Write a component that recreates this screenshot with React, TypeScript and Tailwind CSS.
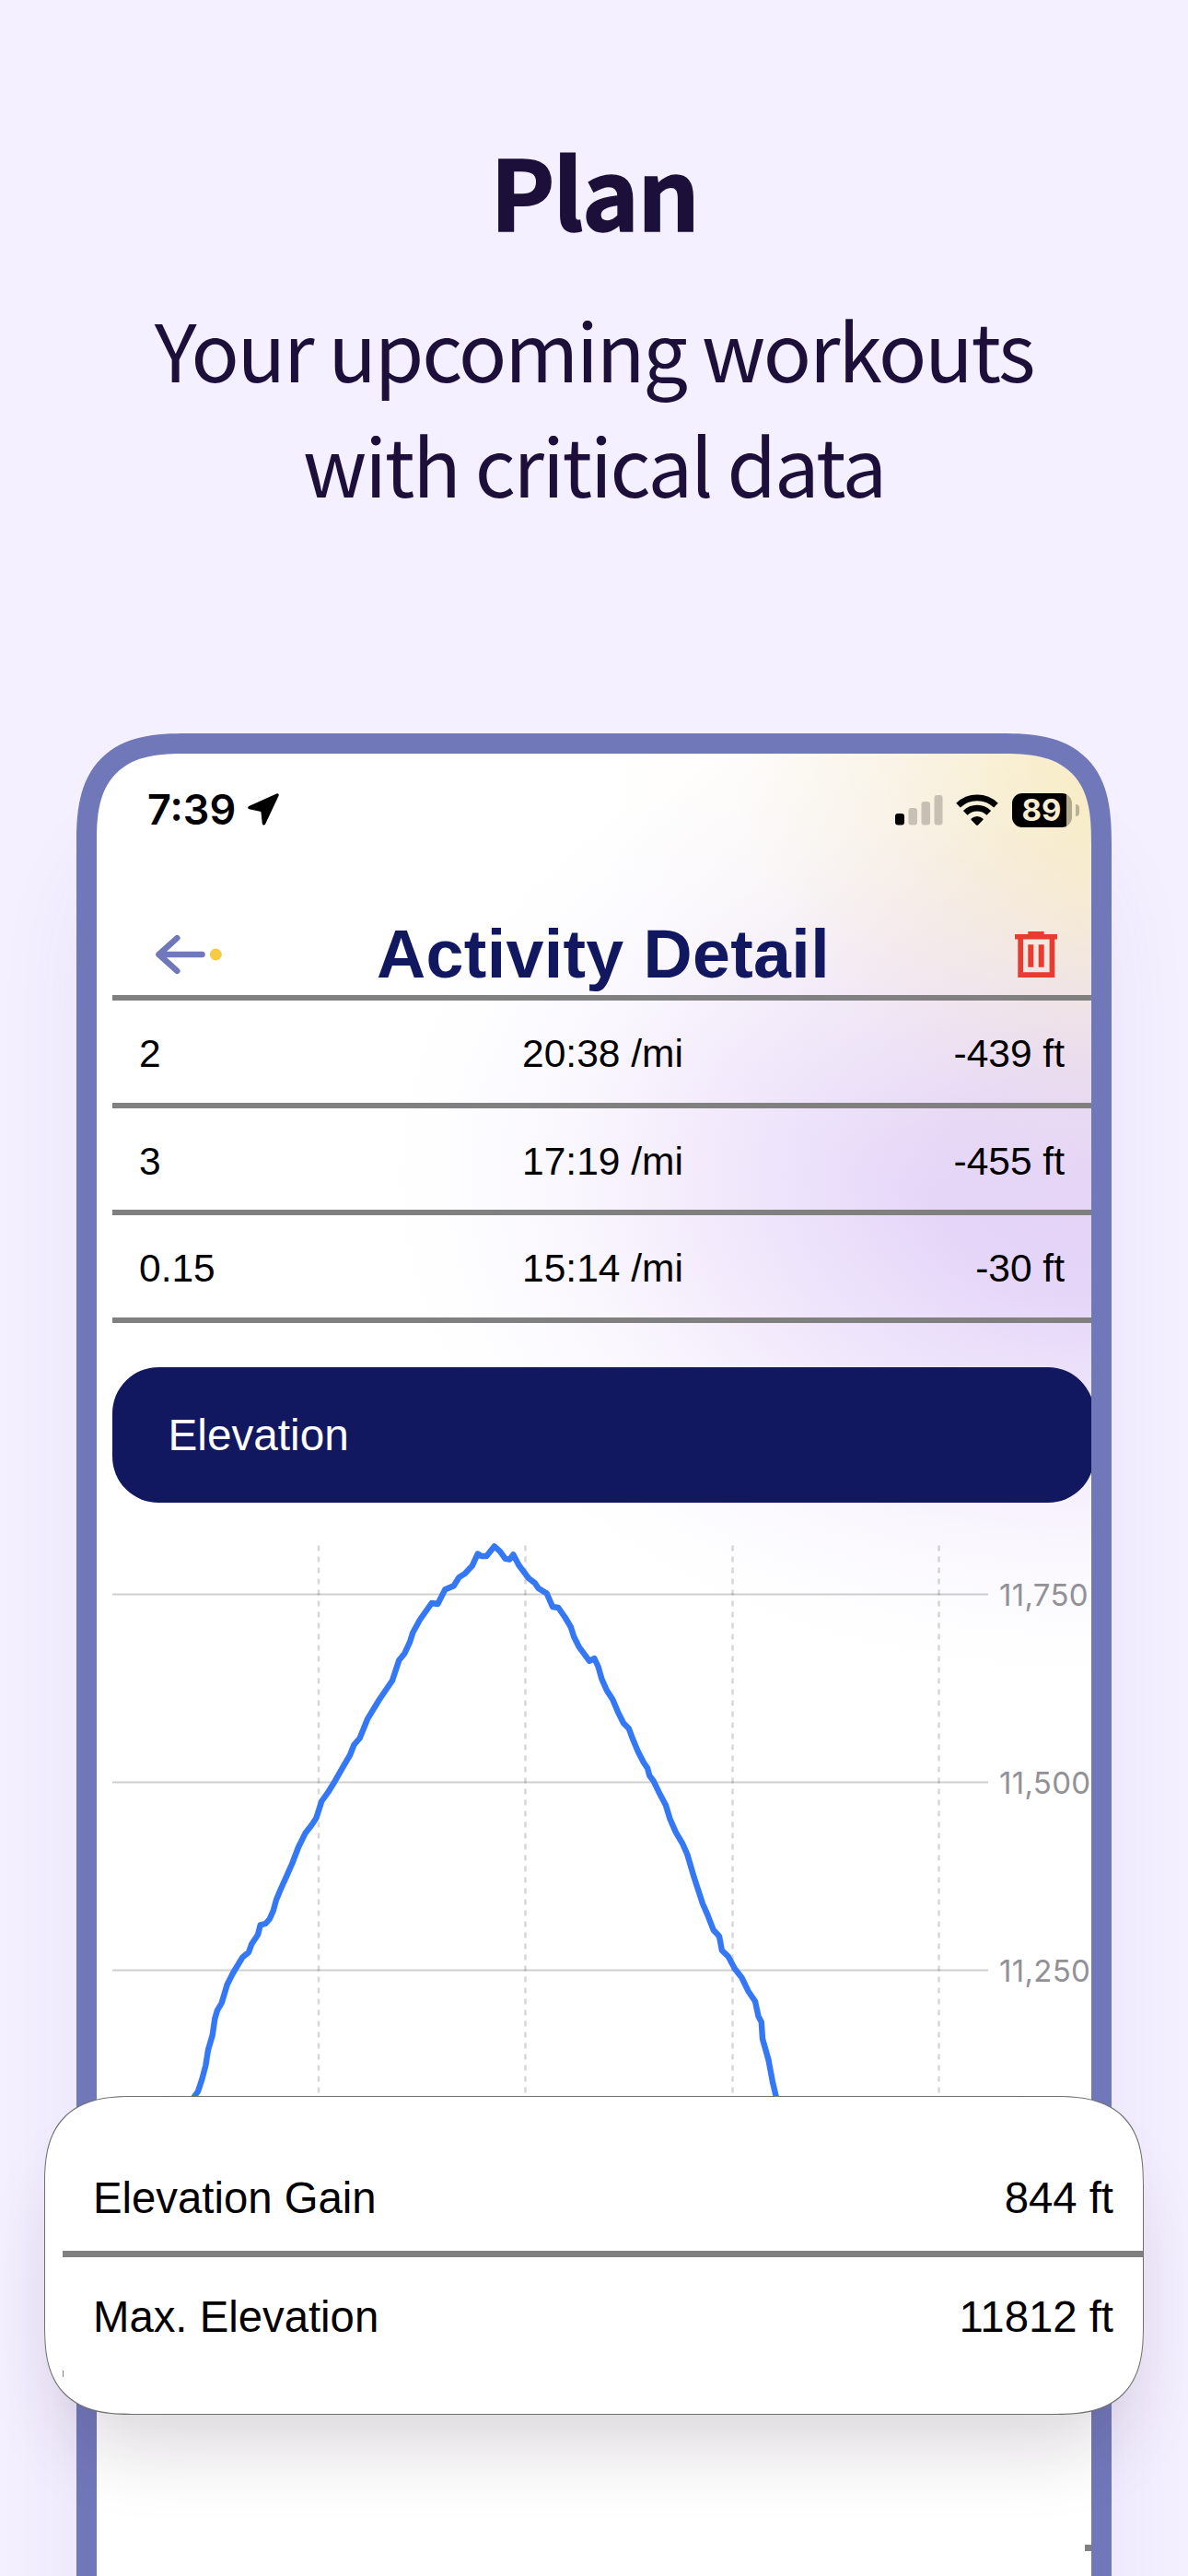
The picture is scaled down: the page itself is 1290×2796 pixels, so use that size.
const splits = [
  { distance: "2", pace: "20:38 /mi", change: "-439 ft" },
  { distance: "3", pace: "17:19 /mi", change: "-455 ft" },
  { distance: "0.15", pace: "15:14 /mi", change: "-30 ft" },
];

const summary = [
  { label: "Elevation Gain", value: "844 ft" },
  { label: "Max. Elevation", value: "11812 ft" },
];

const yTicks = [
  { label: "11,750", y: 70.5 },
  { label: "11,500", y: 274.5 },
  { label: "11,250", y: 478.5 },
];

const xTicks = [224, 448.5, 673.5, 897.5];

const elevation =
  "88,617 93,610 97.3,597 101.3,582 104,565 108.7,549 111.3,531 114,522 118.7,514 124.7,494 131.3,481 141.3,464.5 148,459 151.3,450 158,440 160.7,429.4 166.3,428 170.7,423 174.7,414 178,402 183,390 188.7,377.5 195.3,362.5 202,345 209.7,329.4 216.3,321 221.3,313.5 227.3,295 234,285.7 242,272.7 251.3,256.3 258,245 262.3,234 268.7,226.5 277.3,205.3 289.7,185 304,164 311.3,142 317.3,134.7 323,122.4 326.3,112 334,98 346.7,80 353.3,81 361.3,65.3 370.7,61.2 376.3,52.2 383,47.8 390.7,39.6 396.7,26.5 400.7,29 406.3,29 414.7,18.4 420.7,23.7 426.7,31.8 431.3,32.7 435.3,27.3 441.3,38.8 452,53 459,58.4 462.7,64 471.7,69.4 478,84 484.3,85 491.9,96 497.8,106 501.1,116.3 506.6,127.3 518,142.9 523.4,140 527.6,149 531.4,162.4 536.9,174.7 543.2,184.5 548.7,197.6 555,210.2 560.9,216.3 565.5,228.6 570.6,240.8 576.9,253 581.1,259.2 583.2,267.3 587.4,272.7 593.7,285.7 600.9,299.2 605.5,314.3 611.8,328.6 619,340.8 624.4,353 631.6,377.6 637,393.9 640.9,406 646.3,418.4 652.6,434.7 659,441.6 661.9,457 668.6,463.3 675.8,476.7 683.4,486.5 690.5,501.2 698,512.2 701.5,528.6 704.8,534.7 706,553 712.4,575.5 717,600 720.8,616";

function StatusBar() {
  return (
    <div className="flex h-[122px] shrink-0 items-center pl-[55px] pr-[13px] text-black">
      <span className="w-[95px] whitespace-nowrap font-['Inter',sans-serif] text-[45px] font-semibold leading-[50px]">
        7:39
      </span>
      <svg className="ml-[13px] h-9 w-9" viewBox="0 0 36 36">
        <path
          d="M3 15.500 33 2 18.500 32.800 17 18.500Z"
          fill="currentColor"
          stroke="currentColor"
          strokeWidth="3.500"
          strokeLinejoin="round"
        />
      </svg>

      <div className="ml-auto flex items-center">
        <svg className="h-[34px] w-[52px]" viewBox="0 0 52 34">
          <rect x="0" y="21" width="10" height="12.500" rx="3" />
          <g fillOpacity="0.2">
            <rect x="14.500" y="15" width="9.500" height="18.500" rx="3" />
            <rect x="28.500" y="8" width="9.500" height="25.500" rx="3" />
            <rect x="42.500" y="1" width="9" height="32.500" rx="3" />
          </g>
        </svg>
        <svg className="ml-[14px] h-[35px] w-[46px]" viewBox="0 0 46 35">
          <g fill="none" stroke="currentColor" strokeWidth="6.600">
            <path d="M2.500 12.200a29.500 29.500 0 0 1 41 0" />
            <path d="M10.200 20.300a18.300 18.300 0 0 1 25.600 0" />
          </g>
          <path d="M16.700 26.500a9 9 0 0 1 12.600 0c.5.5.5 1 0 1.500l-5.300 5.500c-.6.6-1.400.6-2 0L16.700 28c-.5-.5-.5-1 0-1.500Z" />
        </svg>
        <div className="ml-[15px] flex h-[37px] w-[65px] items-center justify-center rounded-[11px] bg-[linear-gradient(90deg,#000_59px,#b2a88c_59px)]">
          <span className="font-['Inter',sans-serif] text-[33px] font-bold leading-[37px] text-[#f9edcf]">
            89
          </span>
        </div>
        <div className="ml-1 h-[13px] w-[4.500px] rounded-r-full bg-black/25" />
      </div>
    </div>
  );
}

function TitleBar() {
  return (
    <div className="flex h-[140px] shrink-0 items-center pl-16 pt-[51px]">
      <svg className="h-[46px] w-[74px]" viewBox="0 0 74 46">
        <path
          d="M50.500 23H3.500M23.300 5.200 3.500 23l19.800 17.800"
          fill="none"
          stroke="#7178ba"
          strokeWidth="6.500"
          strokeLinecap="round"
          strokeLinejoin="round"
        />
        <circle cx="65.300" cy="23" r="6.500" fill="#f6cb45" />
      </svg>
      <h2 className="ml-[166px] w-[490px] whitespace-nowrap text-[73.600px] font-bold leading-[89px] tracking-[0.35px] text-[#121860]">
        Activity Detail
      </h2>
      <svg className="ml-[203px] h-[50px] w-[46px]" viewBox="0 0 46 50" fill="#e93b30">
        <path d="M14.300 0h17.400v3H46v5.400h-2.700V50H3.300V8.400H0V3h14.300V0ZM9 8.400v35.800h28.600V8.400H9Z" />
        <path d="M14.300 14.200h6v24.600h-6zM25.700 14.200h6v24.600h-6z" />
      </svg>
    </div>
  );
}

function SplitsTable() {
  return (
    <div className="ml-[17px] shrink-0 border-t-[6px] border-[#808080]">
      {splits.map((split) => (
        <div
          key={split.distance}
          className="grid h-[116.600px] grid-cols-3 items-center border-b-[6px] border-[#808080] pl-[29px] pr-[29px] pt-1.5 text-[42.500px] leading-[50px] text-black"
        >
          <span>{split.distance}</span>
          <span className="pl-0.5 text-center">{split.pace}</span>
          <span className="text-right">{split.change}</span>
        </div>
      ))}
    </div>
  );
}

function ElevationChart() {
  return (
    <svg className="ml-[17px] mt-[29px] h-[640px] w-[1063px] shrink-0" viewBox="0 0 1063 640">
      {yTicks.map((tick) => (
        <g key={tick.label}>
          <line x1="0" x2="951" y1={tick.y} y2={tick.y} stroke="#00000030" strokeWidth="2" />
          <text
            x="963"
            y={tick.y + 12}
            className="font-['Inter',sans-serif] text-[33px] tracking-[0.3px]"
            fill="#929197"
          >
            {tick.label}
          </text>
        </g>
      ))}
      {xTicks.map((x) => (
        <line
          key={x}
          x1={x}
          x2={x}
          y1="17.500"
          y2="640"
          stroke="#00000028"
          strokeWidth="2.500"
          strokeDasharray="6 6"
        />
      ))}
      <polyline
        points={elevation}
        fill="none"
        stroke="#3478f6"
        strokeWidth="6.400"
        strokeLinejoin="round"
        strokeLinecap="round"
      />
    </svg>
  );
}

function SummaryCard() {
  return (
    <div className="absolute left-[48px] top-[2275px] flex h-[346px] w-[1194px] flex-col overflow-hidden rounded-[76px] border border-[#707070] bg-white pl-[19px] text-[47.300px] leading-[56px] text-black shadow-[0_56px_80px_-20px_rgba(50,25,50,0.17)] supports-[corner-shape:squircle]:rounded-[98px] supports-[corner-shape:squircle]:[corner-shape:superellipse(1.44)]">
      {summary.map((item, i) => (
        <div
          key={item.label}
          className={
            i === 0
              ? "flex h-[174px] items-end justify-between border-b-[7px] border-[#808080] pb-[29px] pl-[33px] pr-[32px]"
              : "flex h-[120px] items-end justify-between pb-[27px] pl-[33px] pr-[32px]"
          }
        >
          <span>{item.label}</span>
          <span>{item.value}</span>
        </div>
      ))}
      <div className="mt-[3px] h-[7px] w-px bg-[#808080]" />
    </div>
  );
}

export default function App() {
  return (
    <main className="relative flex h-[2796px] w-[1290px] flex-col overflow-hidden bg-[#f4f0ff] pt-[143px] font-['Liberation_Sans',Arial,sans-serif]">
      <header className="text-center font-['Noto_Sans_CJK_SC',sans-serif] text-[#1c0f3a]">
        <h1 className="text-[105.500px] font-bold leading-[125px] tracking-[-2px] [-webkit-text-stroke:1.500px_#1c0f3a]">
          Plan
        </h1>
        <p className="mt-[47px] text-[86.400px] leading-[125px] tracking-[-0.025em]">
          Your upcoming workouts
          <br />
          with critical data
        </p>
      </header>

      {/* Phone frame, running off the bottom of the page */}
      <section className="mx-[83px] mt-[231px] flex h-[2100px] shrink-0 flex-col rounded-t-[94px] bg-[#7178ba] px-[22px] pt-[22px] shadow-[0_110px_110px_-20px_rgba(90,60,170,0.1)] supports-[corner-shape:squircle]:rounded-t-[120px] supports-[corner-shape:squircle]:[corner-shape:superellipse(1.44)]">
        <div className="flex h-full flex-col overflow-hidden rounded-t-[72px] bg-white bg-[radial-gradient(ellipse_640px_520px_at_1180px_20px,rgba(247,233,178,0.92)_0%,rgba(247,234,188,0.72)_25%,rgba(247,235,205,0.42)_52%,rgba(250,244,228,0.16)_76%,rgba(255,255,255,0)_100%),radial-gradient(ellipse_760px_540px_at_1080px_460px,#e4d2f7_0%,#e5d5f8_22%,#ece1fb_40%,#f4ecfc_58%,#faf8fe_76%,#ffffff_100%)] supports-[corner-shape:squircle]:rounded-t-[98px] supports-[corner-shape:squircle]:[corner-shape:superellipse(1.5)]">
          <StatusBar />
          <TitleBar />
          <SplitsTable />
          <div className="ml-[17px] mt-[48px] flex h-[147px] w-[1066px] shrink-0 items-center rounded-[50px] bg-[#121860] pl-[60.500px] pt-0.5 text-[47.700px] leading-[56px] text-white">
            Elevation
          </div>
          <ElevationChart />
          <div className="ml-auto mt-[462px] h-[7px] w-[7px] shrink-0 bg-[#808080]" />
        </div>
      </section>

      <SummaryCard />
    </main>
  );
}
